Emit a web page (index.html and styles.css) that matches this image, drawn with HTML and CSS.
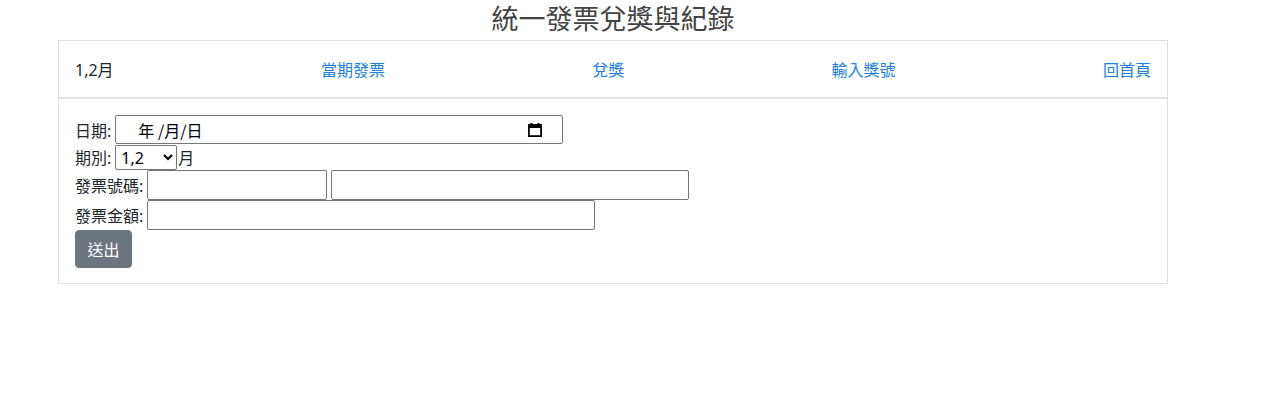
FILE: index.html
```html
<!DOCTYPE html>
<html lang="zh-Hant">
<head>
<meta charset="utf-8">
<title>統一發票兌獎與紀錄</title>
<link rel="stylesheet" href="styles.css">
</head>
<body>
<div class="page">
  <h1 class="title">統一發票兌獎與紀錄</h1>
  <div class="card">
    <nav class="card-nav">
      <span class="nav-text">1,2月</span>
      <a class="nav-link" href="#">當期發票</a>
      <a class="nav-link" href="#">兌獎</a>
      <a class="nav-link" href="#">輸入獎號</a>
      <a class="nav-link" href="#">回首頁</a>
    </nav>
    <form class="card-body">
      <div class="row row-date">
        <label class="lbl">日期:</label>
        <div class="date-input">
          <span class="date-text">年 /月/日</span>
          <svg class="cal" width="14" height="14" viewBox="0 0 14 14" aria-hidden="true">
            <rect x="2.5" y="0" width="2" height="3" fill="#000"/>
            <rect x="9.5" y="0" width="2" height="3" fill="#000"/>
            <rect x="0.9" y="2" width="12.2" height="11.1" fill="none" stroke="#000" stroke-width="1.8"/>
            <rect x="0.9" y="2" width="12.2" height="3" fill="#000"/>
          </svg>
        </div>
      </div>
      <div class="row row-sel">
        <label class="lbl">期別:</label>
        <select class="sel"><option>1,2</option><option>3,4</option></select>
        <span class="unit">月</span>
      </div>
      <div class="row row-text">
        <label class="lbl">發票號碼:</label>
        <input class="inp inp-a" type="text">
        <input class="inp inp-b" type="text">
      </div>
      <div class="row row-text">
        <label class="lbl">發票金額:</label>
        <input class="inp inp-c" type="text">
      </div>
      <button class="btn" type="button">送出</button>
    </form>
  </div>
</div>
</body>
</html>
```
FILE: styles.css
```css
html, body {
  margin: 0;
  padding: 0;
  background: #fff;
}
body {
  font-family: "Noto Sans", "Noto Sans CJK TC", sans-serif;
  font-size: 16px;
  color: #212529;
}
.page {
  width: 1110px;
  margin-left: 58px;
}
.title {
  margin: 0 0 4px;
  height: 36px;
  font-size: 27px;
  line-height: 36px;
  font-weight: 400;
  text-align: center;
  color: #444;
  font-family: "Noto Sans CJK TC", sans-serif;
}
.card {
  border: 1px solid #dfdfdf;
  background: #fff;
}
.card-nav {
  border-bottom: 2px solid #e2e2e2;
  display: flex;
  align-items: center;
  justify-content: space-between;
  padding: 0 16px 0 16px;
  box-sizing: border-box;
  height: 58px;
}
.nav-text {
  color: #212529;
}
.nav-link {
  color: #1a7fe0;
  text-decoration: none;
}
.card-body {
  padding: 16px 16px 15px 16px;
  display: flex;
  flex-direction: column;
  align-items: flex-start;
}
.row {
  display: flex;
  align-items: center;
}
.lbl {
  margin-right: 4px;
}
.row-date { height: 29px; }
.row-sel { height: 26px; }
.row-text { height: 30px; }
.date-input {
  width: 448px;
  height: 29px;
  box-sizing: border-box;
  border: 1px solid #767676;
  border-radius: 2px;
  display: flex;
  align-items: center;
  justify-content: space-between;
  padding: 0 20px 0 22px;
}
.date-text {
  color: #000;
  font-family: "Noto Sans CJK TC", sans-serif;
}
.cal {
  display: block;
}
.sel {
  width: 62px;
  height: 25px;
  box-sizing: border-box;
  border: 1px solid #767676;
  border-radius: 2px;
  font-family: "Noto Sans", "Noto Sans CJK TC", sans-serif;
  font-size: 16px;
  color: #000;
  background: #fff;
  padding: 0 0 0 1px;
  margin: 0;
}
.unit {
  margin-left: 1px;
}
.inp {
  height: 30px;
  box-sizing: border-box;
  border: 1px solid #767676;
  border-radius: 2px;
  margin: 0;
  padding: 1px 2px;
  font-size: 16px;
  background: #fff;
}
.inp-a { width: 180px; }
.inp-b { width: 358px; margin-left: 4px; }
.inp-c { width: 448px; }
.btn {
  width: 57px;
  height: 38px;
  border: 1px solid #6c757d;
  background: #6c757d;
  color: #fff;
  border-radius: 4px;
  font-family: "Noto Sans CJK TC", sans-serif;
  font-size: 16px;
  padding: 0;
  cursor: pointer;
}
```
